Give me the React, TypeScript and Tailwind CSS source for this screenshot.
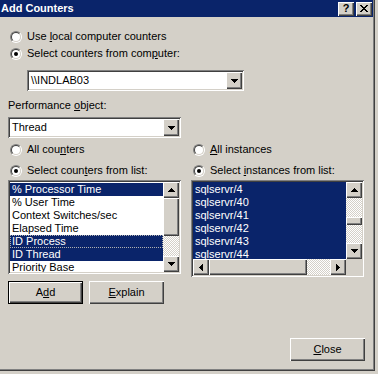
import type { ReactNode } from "react";

const raised =
  "shadow-[inset_1px_1px_#ffffff,inset_-1px_-1px_#404040,inset_-2px_-2px_#808080]";
const sunken =
  "shadow-[inset_1px_1px_#808080,inset_-1px_-1px_#ffffff,inset_2px_2px_#404040,inset_-2px_-2px_#d4d0c8]";
const dither =
  "bg-[image:repeating-conic-gradient(#ffffff_0_25%,#d4d0c8_0_50%)] bg-[length:2px_2px]";

const counters = [
  { name: "% Processor Time", sel: true },
  { name: "% User Time" },
  { name: "Context Switches/sec" },
  { name: "Elapsed Time" },
  { name: "ID Process", sel: true, focus: true },
  { name: "ID Thread", sel: true },
  { name: "Priority Base" },
];

const instances = ["sqlservr/4", "sqlservr/40", "sqlservr/41", "sqlservr/42", "sqlservr/43", "sqlservr/44"];

function Arrow({ dir }: { dir: "up" | "down" | "left" | "right" }) {
  if (dir === "down" || dir === "up") {
    const rows = dir === "down" ? [0, 1, 2, 3] : [3, 2, 1, 0];
    return (
      <svg width="7" height="4" shapeRendering="crispEdges">
        {rows.map((y, i) => (
          <rect key={i} x={i} y={y} width={7 - i * 2} height={1} fill="#000" />
        ))}
      </svg>
    );
  }
  const cols = dir === "right" ? [0, 1, 2, 3] : [3, 2, 1, 0];
  return (
    <svg width="4" height="7" shapeRendering="crispEdges">
      {cols.map((x, i) => (
        <rect key={i} x={x} y={i} width={1} height={7 - i * 2} fill="#000" />
      ))}
    </svg>
  );
}

function ArrowButton({ dir, className = "" }: { dir: "up" | "down" | "left" | "right"; className?: string }) {
  return (
    <div className={`w-[16px] h-[16px] shrink-0 bg-[#d4d0c8] flex items-center justify-center ${raised} ${className}`}>
      <Arrow dir={dir} />
    </div>
  );
}

function Radio({ checked, children, className = "" }: { checked?: boolean; children: ReactNode; className?: string }) {
  return (
    <div className={`flex items-center h-[13px] gap-[5px] ml-[2px] whitespace-nowrap ${className}`}>
      <span className="block w-[12px] h-[12px] shrink-0 rounded-full border border-t-[#808080] border-l-[#808080] border-b-white border-r-white">
        <span className="flex w-full h-full items-center justify-center rounded-full border border-t-[#404040] border-l-[#404040] border-b-[#d4d0c8] border-r-[#d4d0c8] bg-white">
          {checked && <span className="block w-[4px] h-[4px] rounded-full bg-black" />}
        </span>
      </span>
      <span>{children}</span>
    </div>
  );
}

function Combo({ value, className = "" }: { value: string; className?: string }) {
  return (
    <div className={`h-[21px] bg-white p-[2px] flex items-center ${sunken} ${className}`}>
      <span className="flex-1 pl-[2px]">{value}</span>
      <ArrowButton dir="down" className="h-[17px]" />
    </div>
  );
}

function PushButton({ children, isDefault }: { children: ReactNode; isDefault?: boolean }) {
  if (isDefault) {
    return (
      <div className="w-[75px] h-[23px] border border-black">
        <div className={`w-full h-full flex items-center justify-center ${raised}`}>{children}</div>
      </div>
    );
  }
  return (
    <div className={`w-[75px] h-[23px] flex items-center justify-center ${raised}`}>{children}</div>
  );
}

export default function App() {
  return (
    <div className="w-[378px] h-[374px] bg-[#d4d0c8] overflow-hidden text-black text-[11px] leading-[13px] font-['Liberation_Sans',Arial,sans-serif]">
      <div className="w-[375px] h-[371px] flex flex-col shadow-[inset_-1px_-1px_#404040,inset_-2px_-2px_#808080]">
        {/* title bar */}
        <div className="h-[17px] w-[373px] bg-[#0a246a] flex items-center justify-between pl-[1px] pr-[1px]">
          <span className="text-white font-bold">Add Counters</span>
          <div className="flex gap-[2px]">
            <div className={`w-[16px] h-[14px] bg-[#d4d0c8] flex items-center justify-center font-bold ${raised}`}>
              ?
            </div>
            <div className={`w-[16px] h-[14px] bg-[#d4d0c8] flex items-center justify-center ${raised}`}>
              <svg width="8" height="7" shapeRendering="crispEdges">
                <path d="M0 0h2v1h-2zM6 0h2v1h-2zM1 1h2v1h-2zM5 1h2v1h-2zM2 2h4v1h-4zM3 3h2v1h-2zM2 4h4v1h-4zM1 5h2v1h-2zM5 5h2v1h-2zM0 6h2v1h-2zM6 6h2v1h-2z" fill="#000" />
              </svg>
            </div>
          </div>
        </div>

        <div className="flex flex-col pl-[8px]">
          <Radio className="mt-[13px]">
            Use <u>l</u>ocal computer counters
          </Radio>
          <Radio checked className="mt-[4px]">
            Select counters from com<u>p</u>uter:
          </Radio>
          <Combo value={"\\\\INDLAB03"} className="mt-[10px] ml-[19px] w-[217px]" />

          <div className="mt-[8px] h-[13px]">
            Performance <u>o</u>bject:
          </div>
          <Combo value="Thread" className="mt-[5px] w-[173px]" />

          <div className="grid grid-cols-[173px_173px] gap-x-[10px] mt-[5px]">
            <Radio>
              All cou<u>n</u>ters
            </Radio>
            <Radio>
              <u>A</u>ll instances
            </Radio>
            <Radio checked className="mt-[8px]">
              Select coun<u>t</u>ers from list:
            </Radio>
            <Radio checked className="mt-[8px]">
              Select <u>i</u>nstances from list:
            </Radio>

            {/* counters list */}
            <div className={`mt-[3px] self-start h-[94px] bg-white p-[2px] flex ${sunken}`}>
              <div className="flex-1 pt-[1px] overflow-hidden">
                {counters.map((c) => (
                  <div
                    key={c.name}
                    className={`h-[13px] pl-[2px] whitespace-nowrap ${c.sel ? "bg-[#0a246a] text-white" : ""} ${
                      c.focus ? "outline outline-1 outline-dotted outline-[#b0b0b0] -outline-offset-1" : ""
                    }`}
                  >
                    {c.name}
                  </div>
                ))}
              </div>
              <div className="w-[16px] shrink-0 flex flex-col">
                <ArrowButton dir="up" />
                <div className={`h-[38px] bg-[#d4d0c8] ${raised}`} />
                <div className={`flex-1 ${dither}`} />
                <ArrowButton dir="down" />
              </div>
            </div>

            {/* instances list */}
            <div className={`mt-[3px] h-[97px] bg-[#d4d0c8] p-[2px] flex flex-col ${sunken}`}>
              <div className="flex flex-1 min-h-0">
                <div className="flex-1 bg-[#0a246a] text-white pt-[1px] pl-[2px] overflow-hidden">
                  {instances.map((i) => (
                    <div key={i} className="h-[13px] whitespace-nowrap">
                      {i}
                    </div>
                  ))}
                </div>
                <div className="w-[16px] shrink-0 flex flex-col">
                  <ArrowButton dir="up" />
                  <div className={`h-[19px] ${dither}`} />
                  <div className={`h-[8px] bg-[#d4d0c8] ${raised}`} />
                  <div className={`flex-1 ${dither}`} />
                  <ArrowButton dir="down" />
                </div>
              </div>
              <div className="flex h-[16px]">
                <ArrowButton dir="left" />
                <div className={`w-[98px] bg-[#d4d0c8] ${raised}`} />
                <div className={`flex-1 ${dither}`} />
                <ArrowButton dir="right" />
                <div className="w-[16px] bg-[#d4d0c8]" />
              </div>
            </div>
          </div>

          <div className="flex gap-[6px] mt-[4px]">
            <PushButton isDefault>
              A<u>d</u>d
            </PushButton>
            <PushButton>
              <u>E</u>xplain
            </PushButton>
          </div>

          <div className="mt-[34px] ml-[282px]">
            <PushButton>
              <u>C</u>lose
            </PushButton>
          </div>
        </div>
      </div>
    </div>
  );
}
